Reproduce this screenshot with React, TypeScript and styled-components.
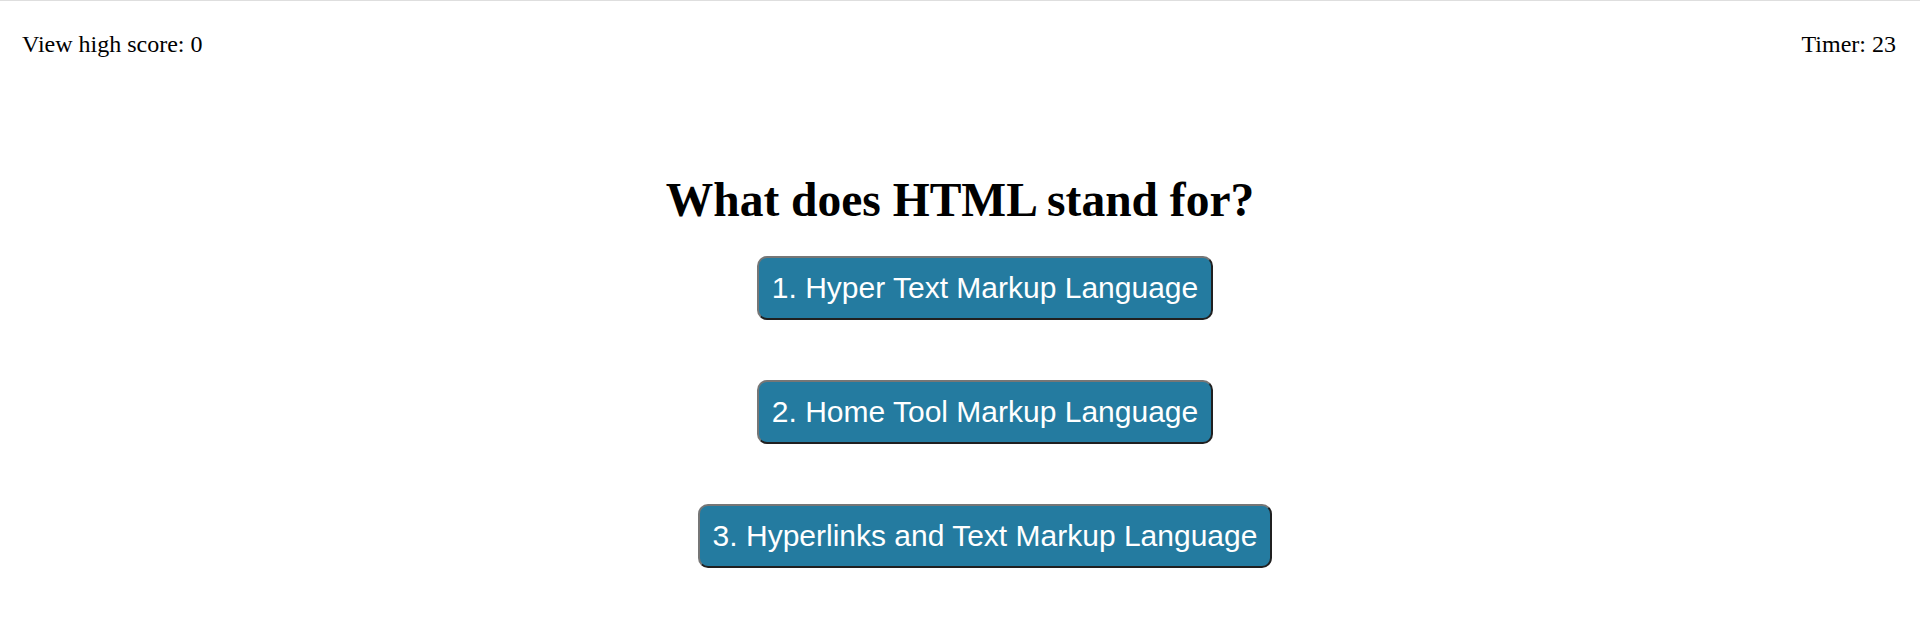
import React from 'react';
import styled, { createGlobalStyle } from 'styled-components';

const GlobalStyle = createGlobalStyle`
  html, body {
    margin: 0;
    padding: 0;
    background: #ffffff;
  }

  body {
    font-family: "Liberation Serif", "Times New Roman", serif;
    color: #000000;
  }
`;

const Page = styled.div`
  border-top: 1px solid #dedede;
  min-height: 625px;
`;

const Header = styled.header`
  display: flex;
  justify-content: space-between;
  align-items: baseline;
  padding: 30px 24px 0 22px;
  font-size: 24px;
  line-height: normal;
`;

const HeaderItem = styled.span`
  white-space: nowrap;
`;

const Quiz = styled.main`
  display: flex;
  flex-direction: column;
  align-items: center;
  margin-top: 115px;
`;

const Question = styled.h1`
  margin: 0;
  font-size: 47.5px;
  font-weight: 700;
  line-height: normal;
  text-align: center;
`;

const Choices = styled.div`
  display: flex;
  flex-direction: column;
  align-items: center;
  gap: 60px;
  margin-top: 29px;
  padding-left: 50px;
`;

const ChoiceButton = styled.button`
  font-family: "Liberation Sans", Arial, sans-serif;
  font-size: 30px;
  line-height: normal;
  color: #ffffff;
  background-color: #247ba0;
  padding: 13px 13px;
  border-width: 2px;
  border-style: solid;
  border-color: #767676 #202020 #202020 #767676;
  border-radius: 10px;
  cursor: pointer;
  white-space: nowrap;
`;

const choices = [
  '1. Hyper Text Markup Language',
  '2. Home Tool Markup Language',
  '3. Hyperlinks and Text Markup Language',
];

const App: React.FC = () => {
  return (
    <Page>
      <GlobalStyle />
      <Header>
        <HeaderItem>View high score: 0</HeaderItem>
        <HeaderItem>Timer: 23</HeaderItem>
      </Header>
      <Quiz>
        <Question>What does HTML stand for?</Question>
        <Choices>
          {choices.map(choice => (
            <ChoiceButton key={choice}>{choice}</ChoiceButton>
          ))}
        </Choices>
      </Quiz>
    </Page>
  );
};

export default App;
